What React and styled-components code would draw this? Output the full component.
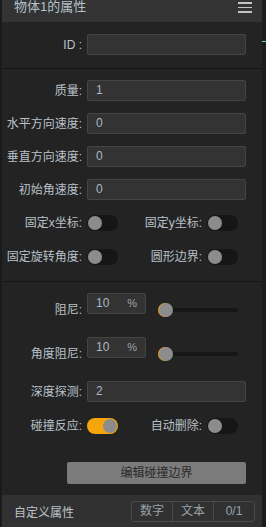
import styled, { createGlobalStyle } from "styled-components";

const Global = createGlobalStyle`
  html, body {
    margin: 0;
    padding: 0;
    background: #1c1c1c;
    font-family: "Liberation Sans", "Noto Sans CJK SC", sans-serif;
  }
`;

const Frame = styled.div`
  display: flex;
  width: 266px;
  height: 527px;
  overflow: hidden;
  background: #1c1c1c;
`;

const Panel = styled.div`
  width: 260px;
  flex-shrink: 0;
  border-left: 2px solid #1a1a1a;
  background: #232323;
  display: flex;
  flex-direction: column;
`;

const Gutter = styled.div`
  flex: 1;
  position: relative;
  background: #1c1c1c;

  &::after {
    content: "";
    position: absolute;
    left: 0;
    right: 0;
    top: 41px;
    height: 1px;
    background: #5ed6d8;
  }
`;

const Header = styled.div`
  height: 22px;
  background: #333333;
  display: flex;
  justify-content: space-between;
  padding: 0 10px 0 12px;
  box-sizing: border-box;
`;

const Title = styled.div`
  color: #b4c2cc;
  font-size: 13px;
  line-height: 14px;
`;

const Menu = styled.div`
  display: flex;
  flex-direction: column;
  gap: 3px;
  padding-top: 2px;
  width: 14px;

  & span {
    display: block;
    height: 1.5px;
    background: #c4c4c4;
  }
`;

const Section = styled.div`
  display: flex;
  flex-direction: column;
  gap: ${(p) => p.$gap || 12}px;
  padding: ${(p) => p.$pad || "12px 0 13px"};
  border-bottom: ${(p) => (p.$line ? "1px solid #161616" : "none")};
`;

const Row = styled.div`
  display: flex;
  align-items: ${(p) => (p.$end ? "flex-end" : "center")};
  height: ${(p) => p.$h || 21}px;
  margin-top: ${(p) => p.$mt || 0}px;
`;

const Label = styled.div`
  width: ${(p) => p.$w || 85}px;
  text-align: right;
  color: #b9c1c8;
  font-size: 12px;
  line-height: 14px;
  white-space: nowrap;
  padding-right: 5px;
  box-sizing: border-box;
`;

const Field = styled.div`
  width: ${(p) => p.$w || 159}px;
  height: 21px;
  box-sizing: border-box;
  background: #333333;
  border: 1px solid #444444;
  border-radius: 2px;
  color: #aab8c6;
  font-size: 12px;
  line-height: 19px;
  padding: 0 8px;
  display: flex;
  justify-content: space-between;
  margin-bottom: ${(p) => p.$mb || 0}px;

  & em {
    font-style: normal;
    color: #9aa4ac;
    font-size: 11px;
  }
`;

const Toggle = styled.div`
  width: 31px;
  height: 16px;
  border-radius: 8px;
  background: ${(p) => (p.$on ? "#f7a50c" : "#161616")};
  display: flex;
  align-items: center;
  justify-content: ${(p) => (p.$on ? "flex-end" : "flex-start")};
  padding: 0 1px;
  box-sizing: border-box;

  &::before {
    content: "";
    width: 14px;
    height: 14px;
    border-radius: 50%;
    background: #8c8c8c;
  }
`;

const Slider = styled.div`
  margin-left: 13px;
  width: 79px;
  height: 14px;
  position: relative;
  display: flex;
  align-items: center;

  &::before {
    content: "";
    width: 100%;
    height: 4px;
    border-radius: 2px;
    background: #161616;
  }

  &::after {
    content: "";
    position: absolute;
    left: 0;
    top: 0;
    width: 14px;
    height: 14px;
    border-radius: 50%;
    background: #8c8c8c;
    box-shadow: -1px 0 0 #e8a020;
  }
`;

const Button = styled.div`
  margin: ${(p) => p.$m || "0"};
  width: 179px;
  height: 22px;
  background: #7b7b7b;
  border-radius: 2px;
  color: #2a2a2a;
  font-size: 12px;
  line-height: 22px;
  text-align: center;
`;

const Footer = styled.div`
  margin-top: auto;
  height: 32px;
  background: #313131;
  display: flex;
  align-items: center;
  justify-content: space-between;
  padding: 0 7px 0 12px;
`;

const FooterTitle = styled.div`
  color: #bcc2c6;
  font-size: 12px;
`;

const Segments = styled.div`
  display: flex;
  border: 1px solid #4a4a4a;
  border-radius: 3px;
  height: 21px;
  box-sizing: border-box;
`;

const Segment = styled.div`
  width: 40px;
  text-align: center;
  color: #9aa2a8;
  font-size: 12px;
  line-height: 19px;
  & + & {
    border-left: 1px solid #4a4a4a;
  }
`;

export default function App() {
  return (
    <Frame>
      <Global />
      <Panel>
        <Header>
          <Title>物体1的属性</Title>
          <Menu>
            <span />
            <span />
            <span />
          </Menu>
        </Header>

        <Section $line>
          <Row>
            <Label>ID :</Label>
            <Field />
          </Row>
        </Section>

        <Section $line $pad="11px 0 16px">
          <Row>
            <Label>质量:</Label>
            <Field>1</Field>
          </Row>
          <Row>
            <Label>水平方向速度:</Label>
            <Field>0</Field>
          </Row>
          <Row>
            <Label>垂直方向速度:</Label>
            <Field>0</Field>
          </Row>
          <Row>
            <Label>初始角速度:</Label>
            <Field>0</Field>
          </Row>
          <Row $h={16} $mt={3}>
            <Label>固定x坐标:</Label>
            <Toggle />
            <Label $w={89}>固定y坐标:</Label>
            <Toggle />
          </Row>
          <Row $h={16} $mt={6}>
            <Label>固定旋转角度:</Label>
            <Toggle />
            <Label $w={89}>圆形边界:</Label>
            <Toggle />
          </Row>
        </Section>

        <Section $gap={20} $pad="11px 0 0">
          <Row $end $h={24}>
            <Label>阻尼:</Label>
            <Field $w={59} $mb={3}>
              10<em>%</em>
            </Field>
            <Slider />
          </Row>
          <Row $end $h={24}>
            <Label>角度阻尼:</Label>
            <Field $w={59} $mb={3}>
              10<em>%</em>
            </Field>
            <Slider />
          </Row>
          <Row>
            <Label>深度探测:</Label>
            <Field>2</Field>
          </Row>
          <Row $h={16} $mt={-4}>
            <Label>碰撞反应:</Label>
            <Toggle $on />
            <Label $w={89}>自动删除:</Label>
            <Toggle />
          </Row>
        </Section>

        <Button $m="28px 0 0 65px">编辑碰撞边界</Button>

        <Footer>
          <FooterTitle>自定义属性</FooterTitle>
          <Segments>
            <Segment>数字</Segment>
            <Segment>文本</Segment>
            <Segment>0/1</Segment>
          </Segments>
        </Footer>
      </Panel>
      <Gutter />
    </Frame>
  );
}
